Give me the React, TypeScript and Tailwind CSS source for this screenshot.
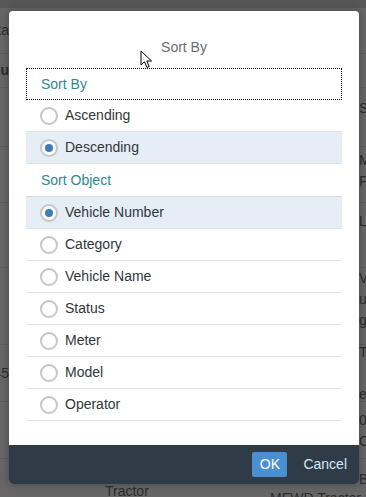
import { useState } from "react";

type Row = { left: string; right: string[]; h: number; pt?: number; bold?: boolean };

const bgRows: Row[] = [
  { left: "Fleet Data", right: [""], h: 46 },
  { left: "Vehicle Nu", right: [""], h: 34, bold: true },
  { left: "", right: ["S"], h: 59, pt: 10 },
  { left: "", right: ["M", "F"], h: 56, pt: 3 },
  { left: "", right: ["L"], h: 65, pt: 8 },
  { left: "", right: ["V3", "u", "g"], h: 77, pt: 0 },
  { left: "45", right: ["T", "", "e"], h: 57 },
  { left: "", right: ["0", "Cr"], h: 57, pt: 8 },
];

function Radio({ checked }: { checked: boolean }) {
  return (
    <span className="flex h-[18px] w-[18px] shrink-0 items-center justify-center rounded-full border-2 border-[#c6c6c6] bg-white">
      {checked && <span className="h-[8px] w-[8px] rounded-full bg-[#3f7db8]" />}
    </span>
  );
}

function Option({ label, checked, onClick }: { label: string; checked: boolean; onClick: () => void }) {
  return (
    <button
      onClick={onClick}
      className={
        "flex h-[32px] w-full items-center gap-[7px] border-b border-[#e3e3e3] pl-[14px] text-left text-[14px] text-[#32363a] " +
        (checked ? "bg-[#e5edf6]" : "bg-white")
      }
    >
      <Radio checked={checked} />
      <span>{label}</span>
    </button>
  );
}

export default function App() {
  const [order, setOrder] = useState("Descending");
  const [field, setField] = useState("Vehicle Number");

  const fields = ["Vehicle Number", "Category", "Vehicle Name", "Status", "Meter", "Model", "Operator"];

  return (
    <div
      className="relative h-[497px] w-[366px] overflow-hidden bg-[#666666]"
      style={{ fontFamily: '"Liberation Sans", Arial, sans-serif' }}
    >
      {/* page behind the dialog */}
      <div className="flex flex-col">
        <div className="h-[8px] bg-[#575757]" />
        {bgRows.map((r, i) => (
          <div
            key={i}
            className="flex justify-between border-b border-[#5c5c5c] text-[14px] text-[#2c2c2c]"
            style={{ height: r.h }}
          >
            <div className="flex w-[9px] items-center justify-end overflow-hidden whitespace-nowrap">
              <span className={r.bold ? "font-bold" : ""}>{r.left}</span>
            </div>
            <div
              className={
                "flex w-[7px] flex-col overflow-hidden whitespace-nowrap leading-[21px] " +
                (r.pt === undefined ? "justify-center" : "justify-start")
              }
              style={r.pt === undefined ? undefined : { paddingTop: r.pt }}
            >
              {r.right.map((t, j) => (
                <span key={j} className="h-[21px] shrink-0">{t}</span>
              ))}
            </div>
          </div>
        ))}
        <div className="flex h-[40px] justify-between text-[14px] text-[#2c2c2c]">
          <span className="pl-[105px] pt-[22px]">Tractor</span>
          <div className="flex w-[7px] flex-col overflow-hidden whitespace-nowrap pt-[10px]">
            <span>B2</span>
          </div>
        </div>
      </div>
      <div className="absolute left-[270px] top-[488px] text-[14px] text-[#2c2c2c]">MFWD Tractor</div>

      {/* dialog */}
      <div className="absolute left-[9px] top-[11px] flex h-[473px] w-[350px] flex-col rounded-[4px] bg-white shadow-[0_0_8px_rgba(0,0,0,0.3)]">
        <div className="h-[57px] pt-[28px] text-center text-[14px] leading-4 text-[#6a6d70]">Sort By</div>

        <div className="flex-1 px-[17px]">
          <div className="flex h-[32px] items-center border border-dotted border-black pl-[14px] text-[14px] text-[#2b8a8e]">
            Sort By
          </div>
          {["Ascending", "Descending"].map((o) => (
            <Option key={o} label={o} checked={order === o} onClick={() => setOrder(o)} />
          ))}
          <div className="flex h-[33px] items-center border-b border-[#dadada] pl-[15px] text-[14px] text-[#2b8a8e]">
            Sort Object
          </div>
          {fields.map((f) => (
            <Option key={f} label={f} checked={field === f} onClick={() => setField(f)} />
          ))}
        </div>

        <div className="flex h-[39px] items-center justify-end gap-[16px] rounded-b-[4px] bg-[#2f3c48] pr-[12px] text-[14px]">
          <button className="h-[25px] w-[35px] rounded-[2px] bg-[#4a8fcf] text-white">OK</button>
          <button className="text-[#d1e6f8]">Cancel</button>
        </div>
      </div>

      {/* mouse pointer */}
      <svg className="absolute left-[140px] top-[50px]" width="14" height="20" viewBox="0 0 14 20">
        <path d="M1 1 L1 15 L4.5 11.8 L7 17.5 L9.2 16.5 L6.8 11 L11.5 11 Z" fill="#fff" stroke="#000" strokeWidth="1" strokeLinejoin="round" />
      </svg>
    </div>
  );
}
